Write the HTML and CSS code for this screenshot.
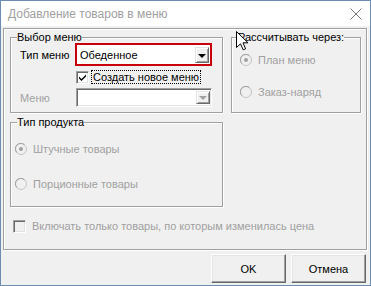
FILE: index.html
```html
<!DOCTYPE html>
<html lang="ru">
<head>
    <meta charset="UTF-8">
    <title>Добавление товаров в меню</title>
    <link rel="stylesheet" href="styles.css">
</head>
<body>
    <div class="window">
        <div class="titlebar">
            <span class="title">Добавление товаров в меню</span>
            <svg class="close" width="12" height="12" viewBox="0 0 12 12">
                <path d="M0.5 0.5 L11.5 11.5 M11.5 0.5 L0.5 11.5" stroke="#777" stroke-width="1" fill="none"/>
            </svg>
        </div>
        <div class="client">
            <div class="panel">
                <div class="top-row">
                    <fieldset class="group group-menu">
                        <legend>Выбор меню</legend>
                        <div class="form-grid">
                            <span class="field-label">Тип меню</span>
                            <div class="highlight">
                                <span class="combo-text">Обеденное</span>
                                <span class="drop-btn"><span class="arrow"></span></span>
                            </div>
                            <span></span>
                            <div class="check-row create-row">
                                <span class="box">
                                    <svg width="9" height="9" viewBox="0 0 9 9"><path d="M1 3.5 L3.5 6 L8 1.5 L8 3.5 L3.5 8 L1 5.5 Z" fill="#000"/></svg>
                                </span>
                                <span class="focus-text">Создать новое меню</span>
                            </div>
                            <span class="field-label disabled">Меню</span>
                            <div class="combo combo-disabled">
                                <span class="combo-text"></span>
                                <span class="drop-btn"><span class="arrow arrow-grey"></span></span>
                            </div>
                        </div>
                    </fieldset>
                    <fieldset class="group group-calc">
                        <legend>Рассчитывать через:</legend>
                        <div class="radio-list calc-list">
                            <div class="radio-row disabled">
                                <svg class="radio" width="12" height="12" viewBox="0 0 12 12">
                                    <circle cx="6" cy="6" r="5.5" fill="#f0f0f0" stroke="#c4c4c4"/>
                                    <path d="M1.9 9.5 A5 5 0 0 1 9.5 1.9" stroke="#a0a0a0" fill="none"/>
                                    <circle cx="6" cy="6" r="2" fill="#a0a0a0"/>
                                </svg>
                                <span>План меню</span>
                            </div>
                            <div class="radio-row disabled">
                                <svg class="radio" width="12" height="12" viewBox="0 0 12 12">
                                    <circle cx="6" cy="6" r="5.5" fill="#f0f0f0" stroke="#c4c4c4"/>
                                    <path d="M1.9 9.5 A5 5 0 0 1 9.5 1.9" stroke="#a0a0a0" fill="none"/>
                                </svg>
                                <span>Заказ-наряд</span>
                            </div>
                        </div>
                    </fieldset>
                </div>
                <fieldset class="group group-product">
                    <legend>Тип продукта</legend>
                    <div class="radio-list product-list">
                        <div class="radio-row disabled">
                            <svg class="radio" width="12" height="12" viewBox="0 0 12 12">
                                <circle cx="6" cy="6" r="5.5" fill="#f0f0f0" stroke="#c4c4c4"/>
                                <path d="M1.9 9.5 A5 5 0 0 1 9.5 1.9" stroke="#a0a0a0" fill="none"/>
                                <circle cx="6" cy="6" r="2" fill="#a0a0a0"/>
                            </svg>
                            <span>Штучные товары</span>
                        </div>
                        <div class="radio-row disabled">
                            <svg class="radio" width="12" height="12" viewBox="0 0 12 12">
                                <circle cx="6" cy="6" r="5.5" fill="#f0f0f0" stroke="#c4c4c4"/>
                                <path d="M1.9 9.5 A5 5 0 0 1 9.5 1.9" stroke="#a0a0a0" fill="none"/>
                            </svg>
                            <span>Порционные товары</span>
                        </div>
                    </div>
                </fieldset>
                <div class="check-row bottom-check disabled">
                    <span class="box box-disabled"></span>
                    <span>Включать только товары, по которым изменилась цена</span>
                </div>
            </div>
            <div class="buttons">
                <button class="btn">OK</button>
                <button class="btn">Отмена</button>
            </div>
        </div>
        <!-- mouse pointer that was caught in the screenshot -->
        <svg class="cursor" width="13" height="20" viewBox="0 0 13 20">
            <path d="M0.5 0.5 L0.5 16.5 L4.5 12.8 L7.2 18.8 L9.6 17.8 L7 11.8 L12 11.8 Z" fill="#fff" stroke="#000" stroke-width="1" stroke-linejoin="miter"/>
        </svg>
    </div>
</body>
</html>
```

FILE: styles.css
```css
* {
    box-sizing: border-box;
}
body {
    margin: 0;
    font-family: "Liberation Sans", Arial, sans-serif;
    font-size: 11px;
    color: #000;
    background: #fff;
}
.window {
    position: relative;
    width: 371px;
    height: 286px;
    border: 1px solid #6b8db4;
    background: #f0f0f0;
    display: flex;
    flex-direction: column;
}
.titlebar {
    height: 25px;
    flex: none;
    background: #fff;
    display: flex;
    align-items: center;
    justify-content: space-between;
    padding: 0 8px 0 7px;
}
.title {
    font-size: 12px;
    color: #a0a0a0;
}
.client {
    flex: 1;
    padding: 2px 3px 2px 2px;
    display: flex;
    flex-direction: column;
}
.panel {
    height: 222px;
    flex: none;
    border: 1px solid #a0a0a0;
    box-shadow: inset 1px 1px #fff, 1px 1px #fff;
    padding: 2px 5px 0 6px;
}
.top-row {
    display: flex;
    gap: 8px;
}
.group {
    margin: 0;
    padding: 0;
    min-width: 0;
    border: 1px solid #a0a0a0;
    box-shadow: inset 1px 1px #fff, 1px 1px #fff;
}
.group legend {
    margin-left: 6px;
    padding: 0;
    line-height: 13px;
    background: #f0f0f0;
}
.group-menu {
    width: 213px;
    height: 82px;
}
.group-calc {
    width: 130px;
    height: 82px;
}
.group-product {
    width: 213px;
    height: 91px;
    margin-top: 3px;
}

/* Выбор меню */
.form-grid {
    display: grid;
    grid-template-columns: 56px 137px;
    grid-template-rows: 23px 14px 19px;
    row-gap: 4px;
    align-items: center;
    margin-top: -1px;
    padding-left: 8px;
}
.field-label {
    padding-left: 1px;
}
.disabled {
    color: #a0a0a0;
}
.highlight {
    height: 23px;
    border: 2px solid #c8000c;
    background: #fff;
    display: flex;
    align-items: center;
    justify-content: space-between;
    padding: 2px 1px 1px 3px;
}
.combo {
    height: 19px;
    margin-left: 1px;
    border: 1px solid;
    border-color: #a0a0a0 #fff #fff #a0a0a0;
    box-shadow: inset 1px 1px #696969, inset -1px -1px #e3e3e3;
    background: #fff;
    display: flex;
    align-items: center;
    justify-content: space-between;
    padding: 2px 1px 2px 3px;
}
.combo-text {
    line-height: 13px;
}
.drop-btn {
    width: 14px;
    align-self: stretch;
    background: #f0f0f0;
    border: 1px solid;
    border-color: #e3e3e3 #696969 #696969 #e3e3e3;
    box-shadow: inset 1px 1px #fff, inset -1px -1px #a0a0a0;
    display: flex;
    align-items: center;
    justify-content: center;
}
.arrow {
    width: 0;
    height: 0;
    border-left: 4px solid transparent;
    border-right: 4px solid transparent;
    border-top: 4px solid #000;
    margin-top: 1px;
}
.arrow-grey {
    border-top-color: #a0a0a0;
}
.check-row {
    display: flex;
    align-items: center;
    height: 14px;
}
.create-row {
    margin-left: 1px;
    gap: 2px;
}
.box {
    width: 13px;
    height: 13px;
    flex: none;
    background: #fff;
    border: 1px solid;
    border-color: #a0a0a0 #fff #fff #a0a0a0;
    box-shadow: inset 1px 1px #696969, inset -1px -1px #e3e3e3;
    display: flex;
    align-items: center;
    justify-content: center;
}
.box-disabled {
    background: #f0f0f0;
}
.focus-text {
    outline: 1px dotted #000;
    outline-offset: -1px;
    padding: 0 2px;
    line-height: 14px;
}

/* radio groups */
.radio-list {
    display: flex;
    flex-direction: column;
}
.radio-row {
    display: flex;
    align-items: center;
    gap: 6px;
    height: 14px;
}
.radio {
    flex: none;
}
.calc-list {
    padding: 9px 0 0 8px;
    gap: 18px;
}
.product-list {
    padding: 13px 0 0 4px;
    gap: 21px;
}
.bottom-check {
    margin: 12px 0 0 3px;
    gap: 6px;
}

.buttons {
    display: flex;
    justify-content: flex-end;
    gap: 5px;
    margin-top: 4px;
    padding-right: 1px;
}
.btn {
    width: 75px;
    height: 29px;
    font-family: inherit;
    font-size: 11px;
    font-weight: normal;
    color: #000;
    background: #f0f0f0;
    border: 1px solid;
    border-color: #fff #696969 #696969 #fff;
    box-shadow: inset -1px -1px #a0a0a0, inset 1px 1px #e3e3e3;
    padding: 0;
}
.cursor {
    position: absolute;
    left: 235px;
    top: 30px;
}
```
